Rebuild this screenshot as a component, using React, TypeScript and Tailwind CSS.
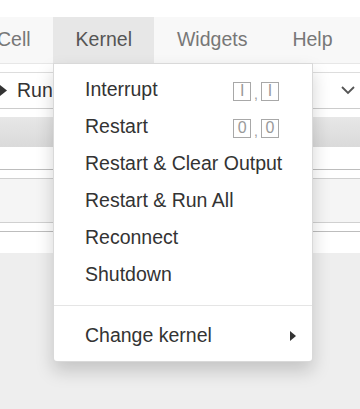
import React from 'react'

const items = [
  { label: 'Interrupt', keys: ['I', 'I'] },
  { label: 'Restart', keys: ['0', '0'] },
  { label: 'Restart & Clear Output' },
  { label: 'Restart & Run All' },
  { label: 'Reconnect' },
  { label: 'Shutdown' },
]

function Key({ k }: { k: string }) {
  return (
    <span className="flex h-[19px] w-[18px] items-center justify-center border border-[#a8a8a8] text-[16px] leading-none text-[#9a9a9a]">
      {k}
    </span>
  )
}

export default function App() {
  return (
    <div className="relative h-[409px] w-[360px] overflow-hidden bg-[#eeeeee] font-['Liberation_Sans',Arial,sans-serif]">
      {/* header */}
      <div className="h-[17px] bg-white" />

      {/* menubar */}
      <div className="h-[46px] overflow-hidden bg-[#f8f8f8]">
        <div className="-ml-[25.5px] flex h-full whitespace-nowrap text-[19.5px] text-[#777]">
          <div className="flex items-center px-[22.5px]">Cell</div>
          <div className="flex items-center bg-[#e7e7e7] px-[22.5px] text-[#555]">Kernel</div>
          <div className="flex items-center px-[22.5px]">Widgets</div>
          <div className="flex items-center px-[22.5px]">Help</div>
        </div>
      </div>
      <div className="h-px bg-[#e7e7e7]" />

      {/* toolbar */}
      <div className="h-[8px] bg-white" />
      <div className="h-px bg-[#dddddd]" />
      <div className="flex h-[35px] items-center bg-white text-[19.5px] text-[#333]">
        <svg width="8" height="11" viewBox="0 0 8 11" className="mr-[9px]">
          <polygon points="0,0 7,5.5 0,11" fill="#333" />
        </svg>
        <span>Run</span>
        <svg width="14" height="9" viewBox="0 0 14 9" className="ml-auto mr-[5px]">
          <polyline points="1,1 7,7 13,1" fill="none" stroke="#555" strokeWidth="1.8" />
        </svg>
      </div>
      <div className="h-px bg-[#cccccc]" />

      {/* notebook area */}
      <div className="h-[8px] bg-white" />
      <div className="h-[30px] bg-gradient-to-b from-[#e7e7e7] to-[#dadada]" />
      <div className="h-[22px] bg-white" />
      <div className="h-px bg-[#bdbdbd]" />
      <div className="h-[8px] bg-white" />
      <div className="h-px bg-[#d0d0d0]" />
      <div className="h-[43px] bg-[#f5f5f5]" />
      <div className="h-px bg-[#d0d0d0]" />
      <div className="h-[8px] bg-white" />
      <div className="h-px bg-[#bdbdbd]" />
      <div className="h-[21px] bg-white" />

      {/* kernel dropdown */}
      <div className="absolute left-[53px] top-[63px] w-[260px] whitespace-nowrap rounded-b-[4px] border border-black/15 bg-white pt-[7px] pb-[7px] text-[19.5px] text-[#333] shadow-[0_9px_18px_rgba(0,0,0,0.175)]">
        {items.map((item) => (
          <div key={item.label} className="flex h-[37px] items-center pl-[31px] pr-[33px]">
            <span>{item.label}</span>
            {item.keys && (
              <span className="ml-auto mt-[3px] flex items-end">
                <Key k={item.keys[0]} />
                <span className="mx-[3px] text-[14px] leading-none text-[#9a9a9a]">,</span>
                <Key k={item.keys[1]} />
              </span>
            )}
          </div>
        ))}
        <div className="mb-[11px] mt-[12px] h-px bg-[#e5e5e5]" />
        <div className="flex h-[37px] items-center pl-[31px] pr-[16px]">
          <span>Change kernel</span>
          <svg width="6" height="10" viewBox="0 0 6 10" className="ml-auto">
            <polygon points="0,0 6,5 0,10" fill="#333" />
          </svg>
        </div>
      </div>
    </div>
  )
}
